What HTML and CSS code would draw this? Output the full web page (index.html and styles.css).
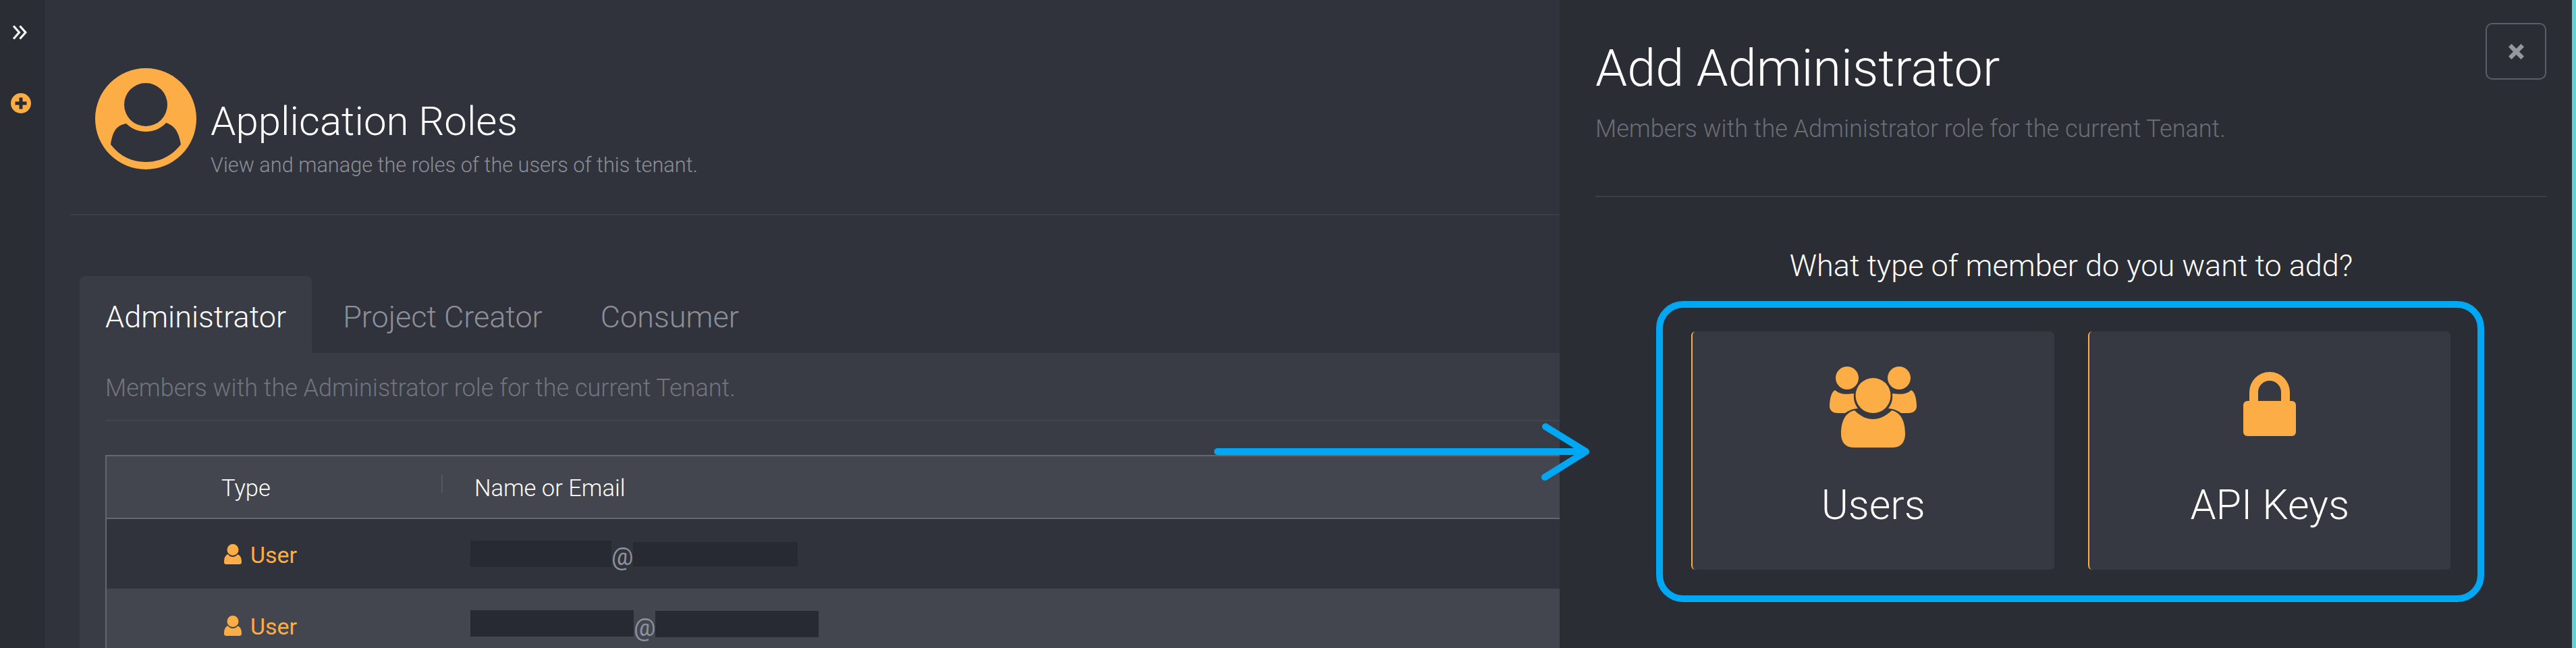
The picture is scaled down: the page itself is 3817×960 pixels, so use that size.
FILE: index.html
```html
<!DOCTYPE html>
<html lang="en">
<head>
    <meta charset="UTF-8">
    <title>Application Roles</title>
    <link rel="stylesheet" href="styles.css">
</head>
<body>
    <div class="app">
        <aside class="sidebar">
            <svg class="expand-icon" viewBox="0 0 20 21"><path d="M1 1.500 9 10.500 1 19.500M10 1.500 18 10.500 10 19.500"/></svg>
            <svg class="add-icon" viewBox="0 0 30 30">
                <circle cx="15" cy="15" r="15"/>
                <path d="M12.500 6.500h5v6h6v5h-6v6h-5v-6h-6v-5h6z"/>
            </svg>
        </aside>

        <main class="content">
            <header class="page-header">
                <svg class="avatar" viewBox="0 0 150 150">
                    <path d="M75 0a75 75 0 1 1 0 150a75 75 0 1 1 0-150zM75 22a32 32 0 1 0 0 64a32 32 0 1 0 0-64zM46 82C30 85 26 95 23 113C37 131 55 139 75 139C95 139 113 131 127 113C124 95 118 85 105 81C97 90 86 94 75 94C64 94 54 90 46 82z" fill-rule="evenodd"/>
                </svg>
                <div class="page-heading">
                    <h1>Application Roles</h1>
                    <p>View and manage the roles of the users of this tenant.</p>
                </div>
            </header>

            <nav class="tabs">
                <a class="tab active">Administrator</a>
                <a class="tab">Project Creator</a>
                <a class="tab">Consumer</a>
            </nav>

            <section class="tab-panel">
                <p class="panel-desc">Members with the Administrator role for the current Tenant.</p>
                <div class="members">
                    <div class="members-head">
                        <div class="col-type">Type</div>
                        <div class="col-name">Name or Email</div>
                    </div>
                    <div class="members-row">
                        <div class="col-type user-type">
                            <svg class="user-icon" viewBox="0 0 26 31"><path d="M13 0a8.500 8.500 0 1 1 0 17a8.500 8.500 0 1 1 0-17zM6 15.500C8 18 10.500 19 13 19s5-1 7-3.500c4 1 6 5 6 11v.5c0 2-1.500 3-3 3H3c-1.500 0-3-1-3-3v-.5c0-6 2-10.500 6-11.500z"/></svg>
                            User
                        </div>
                        <div class="col-name email">
                            <span class="redacted first-a"></span><span class="at">@</span><span class="redacted second-a"></span>
                        </div>
                    </div>
                    <div class="members-row alt">
                        <div class="col-type user-type">
                            <svg class="user-icon" viewBox="0 0 26 31"><path d="M13 0a8.500 8.500 0 1 1 0 17a8.500 8.500 0 1 1 0-17zM6 15.500C8 18 10.500 19 13 19s5-1 7-3.500c4 1 6 5 6 11v.5c0 2-1.500 3-3 3H3c-1.500 0-3-1-3-3v-.5c0-6 2-10.500 6-11.500z"/></svg>
                            User
                        </div>
                        <div class="col-name email">
                            <span class="redacted first-b"></span><span class="at">@</span><span class="redacted second-b"></span>
                        </div>
                    </div>
                </div>
            </section>
        </main>
    </div>

    <aside class="drawer">
        <button class="close-button">
            <svg viewBox="0 0 25 25"><path d="M1 5.500 5.500 1 12.500 8 19.500 1 24 5.500 17 12.500 24 19.500 19.500 24 12.500 17 5.500 24 1 19.500 8 12.500z"/></svg>
        </button>
        <h2>Add Administrator</h2>
        <p class="drawer-desc">Members with the Administrator role for the current Tenant.</p>
        <div class="drawer-body">
            <h3>What type of member do you want to add?</h3>
            <div class="highlight">
                <div class="type-card">
                    <svg class="users-icon" viewBox="0 0 129 120">
                        <circle cx="26" cy="17" r="17"/>
                        <circle cx="103" cy="17" r="17"/>
                        <circle cx="64.500" cy="43" r="26"/>
                        <path d="M8 35C14 40 20 42 36 40C35 50 38 57 42 62C33 63 27 66 23 69H12C5 69 0 65 0 59C0 48 3 37 8 35z"/>
                        <path d="M121 35C115 40 109 42 93 40C94 50 91 57 87 62C96 63 102 66 106 69H117C124 69 129 65 129 59C129 48 126 37 121 35z"/>
                        <path d="M37 65C46 74 55 78 64.500 78S83 74 92 65C102 67 112 76 112 100C112 111 106 120 94 120H35C23 120 17 111 17 100C17 76 27 67 37 65z"/>
                    </svg>
                    <span class="type-label">Users</span>
                </div>
                <div class="type-card">
                    <svg class="lock-icon" viewBox="0 0 78 95">
                        <path d="M9 44V30a30 30 0 0 1 60 0v14H56V30a17 17 0 0 0-34 0v14z"/>
                        <rect y="43" width="78" height="52" rx="6"/>
                    </svg>
                    <span class="type-label">API Keys</span>
                </div>
            </div>
        </div>
    </aside>

    <svg class="arrow" viewBox="0 0 570 90">
        <path d="M10 45H556M496 8 556 45 495 83"/>
    </svg>
</body>
</html>
```

FILE: styles.css
```css
* {
    box-sizing: border-box;
}

html, body {
    margin: 0;
    height: 100%;
}

body {
    position: relative;
    width: 3817px;
    height: 960px;
    overflow: hidden;
    background-color: #30333c;
    font-family: Roboto, "Liberation Sans", sans-serif;
    font-weight: 300;
    color: #fff;
}

.app {
    display: flex;
    height: 960px;
}

.sidebar {
    flex: 0 0 66px;
    display: flex;
    flex-direction: column;
    background-color: #2b2d35;
    padding: 37px 0 0 16px;
}

.expand-icon {
    width: 23px;
    height: 22px;
    margin-left: 2px;
    fill: none;
    stroke: #fff;
    stroke-width: 3;
}

.add-icon {
    width: 30px;
    height: 30px;
    margin-top: 79px;
    fill: #fcad45;
}

.add-icon path {
    fill: #2b2d35;
}

.content {
    flex: 1;
    padding-left: 38px;
    min-width: 0;
}

.page-header {
    display: flex;
    align-items: flex-start;
    height: 319px;
    padding: 101px 0 0 37px;
    border-bottom: 2px solid #3b3d49;
}

.avatar {
    width: 150px;
    height: 150px;
    fill: #fcad45;
}

.page-heading {
    margin-left: 21px;
    padding-top: 43px;
}

h1 {
    margin: 0;
    font-size: 60px;
    font-weight: 300;
    line-height: 72px;
}

.page-heading p {
    margin: 12px 0 0;
    font-size: 30.7px;
    line-height: 34px;
    color: #8b8f97;
}

.tabs {
    display: flex;
    margin: 90px 0 0 14px;
}

.tab {
    height: 114px;
    padding: 5px 38px 0;
    line-height: 112px;
    font-size: 45px;
    color: #8b8f97;
    border-radius: 8px 8px 0 0;
}

.tab + .tab {
    padding: 5px 40px 0 46px;
}

.tab.active {
    background-color: #393c45;
    color: #fff;
}

.tab-panel {
    background-color: #393c45;
    margin-left: 14px;
    padding: 0 0 0 38px;
    height: 437px;
}

.panel-desc {
    margin: 0;
    height: 101px;
    padding-top: 30px;
    font-size: 36px;
    line-height: 44px;
    color: #70757e;
    border-bottom: 2px solid #43444f;
}

.members {
    margin-top: 50px;
    border-left: 2px solid #66666e;
}

.members-head {
    display: flex;
    align-items: center;
    height: 95px;
    padding-top: 2px;
    background-color: #44464f;
    border-top: 2px solid #66666e;
    border-bottom: 2px solid #66666e;
    font-size: 34.5px;
}

.members-row {
    display: flex;
    align-items: center;
    height: 103px;
    background-color: #30333c;
    font-size: 34px;
}

.members-row.alt {
    background-color: #44464f;
}

.col-type {
    flex: 0 0 498px;
    padding-left: 170px;
    position: relative;
}

.members-head .col-type::after {
    content: "";
    position: absolute;
    right: 0;
    top: 0;
    height: 27px;
    border-right: 2px solid #55575f;
}

.col-name {
    padding-left: 47px;
}

.user-type {
    display: flex;
    align-items: center;
    padding: 2px 0 0 174px;
    color: #fcad45;
    font-weight: 400;
}

.alt .user-type {
    padding-top: 8px;
}

.user-icon {
    width: 26px;
    height: 31px;
    margin-right: 13px;
    fill: #fcad45;
}

.email {
    display: flex;
    align-items: center;
    padding-left: 41px;
    color: #8c939c;
}

.at {
    width: 32px;
    margin-top: 8px;
    text-align: center;
    font-size: 36px;
    font-weight: 400;
}

.alt .at {
    margin-top: 12px;
}

.redacted {
    display: block;
    background-color: #282a33;
}

.first-a { width: 209px; height: 39px; }
.second-a { width: 244px; height: 36px; }
.first-b { width: 242px; height: 39px; }
.second-b { width: 242px; height: 39px; margin-top: 2px; }

.drawer {
    position: absolute;
    top: 0;
    right: 0;
    width: 1506px;
    height: 960px;
    background-color: #2b2d35;
    padding: 0 37px 0 53px;
    border-right: 6px solid #60d2d6;
}

.close-button {
    position: absolute;
    top: 34px;
    left: 1372px;
    width: 90px;
    height: 84px;
    padding: 0;
    background: none;
    border: 2px solid #5a5d6b;
    border-radius: 10px;
}

.close-button svg {
    display: block;
    width: 25px;
    height: 25px;
    margin: 1px auto 0;
    fill: #9499a0;
}

h2 {
    margin: 0;
    padding-top: 55px;
    font-size: 75.5px;
    font-weight: 300;
    line-height: 92px;
}

.drawer-desc {
    margin: 0;
    padding-top: 22px;
    font-size: 36px;
    line-height: 44px;
    color: #6a6e75;
}

.drawer-body {
    margin-top: 77px;
    border-top: 2px solid #3b3d49;
    display: flex;
    flex-direction: column;
    align-items: center;
}

h3 {
    margin: 0;
    padding-top: 74px;
    font-size: 45px;
    font-weight: 300;
    line-height: 56px;
}

.highlight {
    display: flex;
    align-self: flex-start;
    gap: 50px;
    width: 1227px;
    height: 446px;
    margin: 24px 0 0 90px;
    padding: 35px 40px 0 42px;
    border: 10px solid #00a8f3;
    border-radius: 40px;
}

.type-card {
    flex: 1;
    height: 353px;
    display: flex;
    flex-direction: column;
    align-items: center;
    background-color: #363942;
    border-left: 2px solid #fcad45;
    border-radius: 6px;
}

.users-icon {
    width: 129px;
    height: 120px;
    margin-top: 52px;
    fill: #fcad45;
}

.lock-icon {
    width: 78px;
    height: 95px;
    margin: 60px 0 17px;
    fill: #fcad45;
}

.type-label {
    margin-top: 50px;
    font-size: 61px;
    line-height: 70px;
}

.arrow {
    position: absolute;
    left: 1794px;
    top: 624px;
    width: 570px;
    height: 90px;
    fill: none;
    stroke: #00a8f3;
    stroke-width: 10;
    stroke-linecap: round;
    stroke-linejoin: round;
}
```
